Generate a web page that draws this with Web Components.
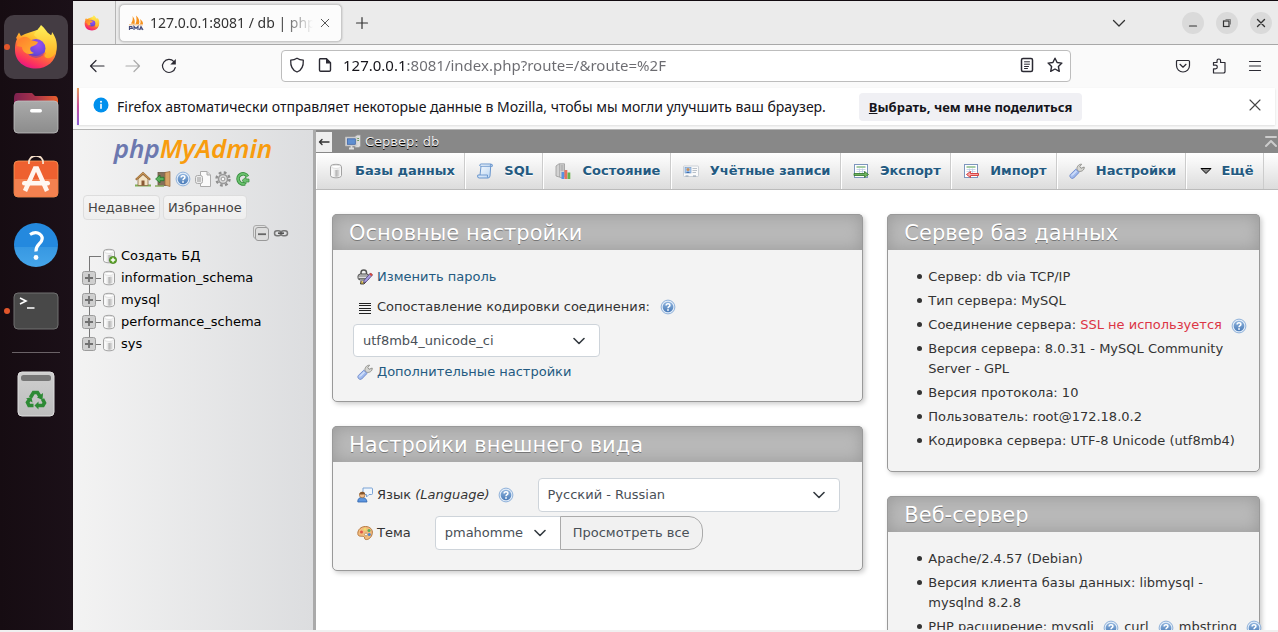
<!DOCTYPE html>
<html lang="ru">
<head>
<meta charset="utf-8">
<title>127.0.0.1:8081 / db | phpMyAdmin</title>
<style>
  html, body { margin: 0; height: 100%; }
  body { overflow: hidden; background: #f0f0f0; font: 13px/20px "DejaVu Sans", sans-serif; color: #333; }
</style>
</head>
<body>
<desktop-shell></desktop-shell>

<script>
/* ---------- icon library ---------- */
const stroke = (d, w = 1.2, extra = '') => `<path d="${d}" fill="none" stroke="currentColor" stroke-width="${w}" stroke-linecap="round" stroke-linejoin="round" ${extra}/>`;
const cylinder = `<defs><linearGradient id="cy"><stop offset="0" stop-color="#fff"/><stop offset=".35" stop-color="#e6e6e6"/><stop offset=".5" stop-color="#b4b4b4"/><stop offset=".8" stop-color="#d2d2d2"/><stop offset="1" stop-color="#f6f6f6"/></linearGradient></defs>
  <path d="M2.500 3.500C2.500 .6 13.500 .6 13.500 3.500V12.500C13.500 15.600 2.500 15.600 2.500 12.500Z" fill="#f6f6f6" stroke="#a2a2a2"/><path d="M4 6C5.500 7.200 10.500 7.200 12 6V12.500C10.500 14.200 5.500 14.200 4 12.500Z" fill="url(#cy)"/><ellipse cx="8" cy="3.800" rx="4.600" ry="1.600" fill="#fff" stroke="#ccc" stroke-width=".6"/>`;
const foxArt = `<defs>
  <linearGradient id="fa" x1=".8" y1="0" x2=".3" y2="1"><stop offset="0" stop-color="#fff44f"/><stop offset=".35" stop-color="#ffb62a"/><stop offset=".6" stop-color="#ff6a3c"/><stop offset=".85" stop-color="#fb2f61"/><stop offset="1" stop-color="#e31587"/></linearGradient>
  <radialGradient id="fb" cx=".6" cy=".3" r=".8"><stop offset="0" stop-color="#a04ff0"/><stop offset=".6" stop-color="#6a49dd"/><stop offset="1" stop-color="#4b35b5"/></radialGradient>
  <linearGradient id="fc" x1="0" y1="0" x2="1" y2="1"><stop offset="0" stop-color="#ff7a2e"/><stop offset="1" stop-color="#ffb52e"/></linearGradient>
  <linearGradient id="fd" x1="0" y1="0" x2="0" y2="1"><stop offset="0" stop-color="#fff25a"/><stop offset="1" stop-color="#ffae22"/></linearGradient></defs>
  <path d="M3 14 6 8.500 8 12 12 10 24 6 35 9C41 13 44 19 43.500 26 43 37 34 44.500 23 44.500 11 44.500 2 37 2 26 2 20 3 17 4 15Z" fill="url(#fa)"/>
  <path d="M28 1C32 4 34 8 37 12 38.500 11 39 10 39 8 43.500 14 45 21 43 27 41 34 33 37 31 31 34 19 24 15 21 11 23 6 26 5 28 1Z" fill="url(#fd)"/>
  <circle cx="23" cy="24.500" r="9.500" fill="url(#fb)"/>
  <path d="M5 17C9 11 15 12 18 16L25 18C24 21 20 22 18 23 16 25 18 28 21 29 15 32 9 28 9 23L4 22Z" fill="url(#fc)"/>
  <path d="M14 28C17 32 23 33 27 31 30 29 32 28 33 29 30 37 19 39 14 28Z" fill="#ff5a3f" opacity=".5"/>`;
const help = `<defs><linearGradient id="hp" x1="0" y1="0" x2="0" y2="1"><stop offset="0" stop-color="#8fb4dd"/><stop offset="1" stop-color="#4a7bb8"/></linearGradient></defs>
  <circle cx="8" cy="8" r="6.900" fill="#e0ebf8" stroke="#86aad6" stroke-width=".9"/><circle cx="8" cy="8" r="5.300" fill="url(#hp)"/>
  <path d="M6.100 6.500C6.100 4.100 9.900 4.200 9.900 6.400 9.900 7.700 8 7.700 8 9.300" fill="none" stroke="#fff" stroke-width="1.500"/><rect x="7.200" y="10.200" width="1.600" height="1.600" fill="#fff"/>`;
const wrench = `<defs><linearGradient id="wr" x1="0" y1="0" x2="1" y2="1"><stop offset="0" stop-color="#cfe0ff"/><stop offset="1" stop-color="#7e9ee0"/></linearGradient></defs>
  <path d="M8 6.800C7.400 4 9.500 1 12.600 1.200L10.800 3.600 12 5.300 15.200 4C15.600 7 12.500 9 9.800 8.300Z" fill="#d6d6d2" stroke="#8c8c88" stroke-width=".9"/>
  <path d="M6.800 6.200 10.100 9.400 4.700 15C2.500 16.500 -.2 13.700 1.300 11.500Z" fill="url(#wr)" stroke="#6d88c9" stroke-width=".9"/><path d="M3 12.500 7.500 8" stroke="#eef4ff"/>`;
const sheet = `<rect x="1.500" y="1.500" width="13" height="13" fill="#fff" stroke="#7d95bd"/><path d="M3.500 4H12.500" stroke="#7fb77f" stroke-width="1.400"/><path d="M3.500 6.500H12.500M3.500 8.500H12.500M3.500 11H12.500M6.500 5.500V12.500M9.500 5.500V12.500" stroke="#bccbe4" stroke-width=".8"/>`;

const ICONS = {
  firefox: [46, foxArt],
  files: [46, `<defs><linearGradient id="a"><stop offset="0" stop-color="#7d2150"/><stop offset=".5" stop-color="#a9334a"/><stop offset="1" stop-color="#e9602c"/></linearGradient><linearGradient id="b" x1="0" y1="0" x2="0" y2="1"><stop offset="0" stop-color="#aaa"/><stop offset="1" stop-color="#8c8c8c"/></linearGradient></defs>
    <path d="M1 8C1 5 2 3 4 3H19L22 6H42C44 6 45 8 45 10V16H1Z" fill="url(#a)"/><rect x="1" y="11" width="44" height="32" rx="4" fill="url(#b)" stroke="#c0c0c0" stroke-width=".8"/><rect x="17" y="19" width="12" height="3.500" rx="1.700" fill="#fff"/>`],
  software: [46, `<rect x="1" y="5" width="44" height="36" rx="4" fill="#ee6130" stroke="#f79c5a" stroke-width=".8"/><path d="M1.500 23H44.500V37C44.500 39 43 40.500 41 40.500H5C3 40.500 1.500 39 1.500 37Z" fill="#f38150"/><path d="M16 8C14.500 -3 31.500 -3 30 8" stroke="#f6dfc9" stroke-width="1.800" fill="none"/>
    <path d="M12 35 22 12.500H24L34 35" fill="none" stroke="#fff5ee" stroke-width="4.500"/><rect x="9" y="25" width="28" height="4.600" rx="2.300" fill="#fff8f2"/>`],
  helpdock: [46, `<defs><linearGradient id="a" x1="0" y1="0" x2="0" y2="1"><stop offset="0" stop-color="#2489de"/><stop offset=".54" stop-color="#2489de"/><stop offset=".55" stop-color="#3798e2"/><stop offset="1" stop-color="#45a5ea"/></linearGradient></defs><circle cx="23" cy="23" r="22" fill="url(#a)"/>
    <path d="M17 12.500C25 7.500 31 14 28.500 19 27 22 22.500 23.500 23 29.500" fill="none" stroke="#fff" stroke-width="3.200"/><circle cx="23" cy="35.500" r="2.400" fill="#fff"/>`],
  terminal: [46, `<rect x="1" y="5" width="44" height="36" rx="4" fill="#484848" stroke="#707070"/><path d="M7 10 13 13 7 16M14 20H21.500" fill="none" stroke="#fff" stroke-width="1.600"/>`],
  trash: [46, `<defs><linearGradient id="a" x1="0" y1="0" x2="0" y2="1"><stop offset="0" stop-color="#cfcfcf"/><stop offset="1" stop-color="#bdbdbd"/></linearGradient></defs><rect x="5" y="1" width="36" height="44" rx="4" fill="url(#a)" stroke="#dedede"/><rect x="8" y="4" width="30" height="6" rx="2.500" fill="#777"/>
    <g fill="none" stroke="#2d8a34" stroke-width="3.600"><path d="M17.500 26.500 20.500 21.500H24.500L27 25.500"/><path d="M29.500 28 31.500 32 30 34.500H24.500"/><path d="M20.500 34.500H16L14.500 31.500 16.500 28.500"/></g><g fill="#2d8a34"><path d="M30 22 29.500 29 24 26.500Z"/><path d="M25.500 30.500V38.500L21.500 34.500Z"/><path d="M13 27.500 18.500 26 19.500 31.500Z"/></g>`],
  pma: [16, `<path d="M3 8.500C5 6 5 3 4.500 1 7 4 7 6.500 6.500 9ZM7.500 9C9 6 8.500 2.500 8 .5 11 3 12 6.500 11 9ZM12 9.300C13 7 12.500 5.500 12 4 14 5.500 15 7 15 9Z" fill="#f6921e"/><path d="M1 9.800H15" stroke="#f3a64f" stroke-width=".8"/><path d="M1.500 15V11.500H3.800L4.300 13.300H1.500M6 15V11.500L8 13.500 10 11.500V15M11.500 15 13 11.500 15 15M12 14H14.500" fill="none" stroke="#444c7c" stroke-width="1.200"/>`],
  close: [16, stroke('M3 3 13 13M13 3 3 13', 1.1)],
  closewin: [16, stroke('M4.500 4.500 11.500 11.500M11.500 4.500 4.500 11.500', 1.4)],
  minwin: [16, stroke('M4.500 11H11.500', 1.2)],
  maxwin: [16, `<rect x="4.500" y="6" width="5.500" height="5.500" fill="none" stroke="#333" stroke-width="1.200"/><path d="M6.500 4.500H11.500V9.500" fill="none" stroke="#777" stroke-width=".9"/>`],
  plus: [16, stroke('M8 2.500V13.500M2.500 8H13.500', 1.2)],
  chevron: [16, stroke('M2.500 5.500 8 11 13.500 5.500', 1.3)],
  back: [16, stroke('M15 8H1.500M7 2.500 1.500 8 7 13.500', 1.2)],
  fold: [12, stroke('M11 6H1.500M4 3.500 1.500 6 4 8.500', 1.4)],
  forward: [16, stroke('M1 8H14.500M9 2.500 14.500 8 9 13.500', 1.2)],
  reload: [16, stroke('M14.300 9.500A6.500 6.500 0 1 1 12.900 3.700', 1.2) + `<path d="M14.800 1V6.500H9.300Z" fill="currentColor"/>`],
  shield: [16, stroke('M8 1.200C10 2.500 12 3 14.300 3.200 14.600 9 12 13.500 8 15 4 13.500 1.400 9 1.700 3.200 4 3 6 2.500 8 1.200Z', 1.3)],
  page: [16, stroke('M3 1.700H9.500L13.500 5.700V13Q13.500 14.300 12.300 14.300H3.700Q2.500 14.300 2.500 13V2.500Z', 1.4) + `<path d="M9 1V6.500H14Z" fill="currentColor"/>`],
  reader: [16, `<rect x="2.500" y="1.500" width="11" height="13" rx="1.500" fill="none" stroke="currentColor" stroke-width="1.500"/>` + stroke('M5.500 4.800H10.500M5.500 7.200H10.500M5.500 9.500H9.500M5.500 11.500H8.500', 1)],
  star: [16, stroke('M8 1.200 10.100 5.500 14.900 6.100 11.400 9.500 12.300 14.300 8 12 3.700 14.300 4.600 9.500 1.100 6.100 5.900 5.500Z', 1.4)],
  pocket: [16, stroke('M2.500 2.500H13.500Q14.500 2.500 14.500 3.500V7.500A6.500 6.500 0 0 1 1.500 7.500V3.500Q1.500 2.500 2.500 2.500Z', 1.2) + stroke('M5 6.300 8 9.200 11 6.300', 1.2)],
  puzzle: [16, stroke('M2.500 15V10.800H4.500A1.800 1.800 0 0 0 4.500 7.200H2.500V4.500H6V2.800A1.800 1.800 0 0 1 9.600 2.800V4.500H14V14L13 15Z', 1.2)],
  burger: [16, stroke('M2.500 3.500H13.500M2.500 8H13.500M2.500 12.500H13.500', 1.2)],
  info: [16, `<circle cx="8" cy="8" r="7.500" fill="#0090ed"/><rect x="7.200" y="6.800" width="1.600" height="5" fill="#fff"/><circle cx="8" cy="4.700" r="1" fill="#fff"/>`],
  home: [16, `<path d="M0 14.500H16" stroke="#7fae54" stroke-width="2"/><path d="M3 8 8 3.500 13 8V14.500H3Z" fill="#f3e3c4" stroke="#8a6a45" stroke-width=".8"/><path d="M.8 8.800 8 2.200 15.200 8.800" fill="none" stroke="#9b6a35" stroke-width="2"/><path d="M1.500 8 8 2 14.500 8" fill="none" stroke="#d7a765" stroke-width=".8"/><rect x="6.500" y="9.500" width="3" height="5" fill="#8a5a35"/>`],
  exit: [16, `<rect x="3" y="1.500" width="8" height="13" fill="#86705a" stroke="#6b5a48" stroke-width=".8"/><path d="M10 1.500 15 .5V15.500L10 14Z" fill="#d7a368" stroke="#99683b" stroke-width=".7"/><path d="M0 15H9" stroke="#8aab60" stroke-width="1.500"/><path d="M.6 8 5 4V6.300H9V9.700H5V12Z" fill="#58b15c" stroke="#24742b" stroke-width=".8"/>`],
  help: [16, help],
  docs: [16, `<path d="M5.500.5H12L15.500 4V15.500H5.500Z" fill="#fafafa" stroke="#aaa"/><path d="M12 .5V4H15.500" fill="#ddd" stroke="#aaa"/><rect x=".5" y="4.500" width="7" height="8" rx="2" fill="#ececec" stroke="#aaa"/><path d="M3 6V11M5 6V11" stroke="#999"/>`],
  gear: [16, `<circle cx="8" cy="8" r="6.500" fill="none" stroke="#8f8f8f" stroke-width="2.400" stroke-dasharray="2.700 2.405"/><circle cx="8" cy="8" r="4.500" fill="#ddd" stroke="#999" stroke-width="1.500"/><circle cx="8" cy="8" r="1.900" fill="#fafafa" stroke="#999"/>`],
  refresh: [16, `<path d="M12.500 5.500A5 5 0 1 0 10 12.500" fill="none" stroke="#338a3a" stroke-width="3.600"/><path d="M12.500 5.500A5 5 0 1 0 10 12.500" fill="none" stroke="#69c06d" stroke-width="2"/><path d="M7 9.500 11 6V8H14V11H11V13Z" fill="#6cc070" stroke="#338a3a" stroke-width=".7"/>`],
  collapse: [16, `<rect x=".5" y=".5" width="13" height="13" rx="2.500" fill="#e0e0e0" stroke="#aaa"/><rect x="2.500" y="2.500" width="13" height="13" rx="2.500" fill="#ddd" stroke="#999"/><path d="M5 9.200H13" stroke="#666" stroke-width="1.800"/>`],
  link: [16, `<g fill="none" stroke="#777" stroke-width="1.500"><rect x="1.500" y="5.700" width="6.500" height="5" rx="2.500"/><rect x="8" y="5.700" width="6.500" height="5" rx="2.500"/></g><path d="M5 8.200H11" stroke="#555" stroke-width="1.600"/>`],
  expand: [14, `<rect x=".5" y=".5" width="13" height="13" rx="2" fill="#cfcfcf" stroke="#9c9c9c"/><path d="M7 3V11M3 7H11" stroke="#707070" stroke-width="1.800"/>`],
  db: [16, cylinder],
  dbadd: [16, cylinder + `<circle cx="12" cy="12" r="3.600" fill="#5fa52b" stroke="#3d7d17" stroke-width=".7"/><path d="M12 9.800V14.200M9.800 12H14.200" stroke="#fff" stroke-width="1.400"/>`],
  server: [16, `<path d="M10 2.500 12 1H15.500V12L14 13.500H10Z" fill="#ddd" stroke="#999" stroke-width=".8"/><path d="M11.500 4.500H14M11.500 6.500H14" stroke="#6a9a5a"/><rect x=".8" y="3.300" width="11" height="8.400" fill="#d9d9d9" stroke="#ccc"/><rect x="2.300" y="4.800" width="8" height="5.500" fill="#5f8fd0" stroke="#33589b" stroke-width=".7"/><path d="M4 14.500H9M6.500 12V14" stroke="#ddd" stroke-width="1.800"/>`],
  sql: [16, `<defs><linearGradient id="a" x1="0" y1="0" x2="1" y2="1"><stop offset="0" stop-color="#fff"/><stop offset="1" stop-color="#b5d2f1"/></linearGradient></defs><path d="M3.500 1H13.500Q16 1 15.300 3.300H13.700L13 13Q12.700 15 11 15H2Q0 15 .8 12H3L4 3.300Q1.500 3 3.500 1Z" fill="url(#a)" stroke="#5b8cc8" stroke-width=".9"/><path d="M3 12H10.500Q10 15 11 14.500M4 3.300H13.700Q12.500 2 14 1" fill="none" stroke="#5b8cc8" stroke-width=".8"/>`],
  status: [16, `<path d="M1 3 4 .8H9.500V14L7.500 15 1 13Z" fill="#d2d2d2" stroke="#999" stroke-width=".8"/><path d="M4.500 1V14" stroke="#999" stroke-width=".6"/><path d="M5.500 3H8.500M5.500 5H8.500M5.500 7H8.500" stroke="#888" stroke-width=".7"/><rect x="6.500" y="9" width="2.800" height="7" fill="#5a91e0"/><rect x="9.500" y="7" width="2.800" height="9" fill="#e8705e"/><rect x="12.500" y="9.500" width="2.800" height="6.500" fill="#6ab24e"/>`],
  users: [16, `<rect x=".5" y="3" width="15" height="10.500" rx=".8" fill="#fafafa" stroke="#c2c8cf" stroke-width=".8"/><rect x="2" y="4.500" width="6" height="5.500" fill="#a9c9ee" stroke="#6c94c6" stroke-width=".6"/><circle cx="5" cy="6.500" r="1.500" fill="#c98f58"/><path d="M3 10Q5 7 7 10" fill="#3c6eae"/><path d="M9.500 5.500H14M9.500 7.500H14M9.500 9.500H13" stroke="#a9b2bd" stroke-width=".8"/><path d="M2.500 13H5.500M10 13H13" stroke="#8e9eb0"/>`],
  export: [16, sheet + `<path d="M1 10.500H11.500V8.500L15.500 11.500 11.500 14.500V12.500H1Z" fill="#6db35e" stroke="#2f7429" stroke-width=".8"/>`],
  import: [16, sheet + `<path d="M15.500 10.500H7.500V8.500L3.500 11.500 7.500 14.500V12.500H15.500Z" fill="#f6a5a5" stroke="#d43333" stroke-width=".9"/>`],
  wrench: [16, wrench],
  more: [16, `<path d="M3 5.500H13L8 10.500Z" fill="#888" stroke="#000"/>`],
  password: [16, `<path d="M4 5V3.500C4 0 9.500 0 9.500 3.500V5" fill="none" stroke="#555" stroke-width="1.500"/><rect x="1" y="5" width="11" height="6" rx="2.500" fill="#ddd" stroke="#444"/><path d="M.8 7H11M.8 9.500H11" stroke="#777"/><path d="M4 12 3.500 15H7L9 13" fill="#d7bd52" stroke="#222" stroke-width=".8"/><path d="M13.500 4 15.500 6 9 13 6.500 14 7.200 11.200Z" fill="#a79be2" stroke="#4d4176" stroke-width=".8"/><path d="M13 4.500 15 6.500" stroke="#d3483b" stroke-width="2"/>`],
  lines: [16, `<path d="M2 4.500H14M2 6.500H14M2 9.500H14M2 11.500H14M2 14.500H14" stroke="#222"/>`],
  lang: [16, `<path d="M6 1H14.500Q15.500 1 15.500 2V6.500Q15.500 7.500 14.500 7.500H12L9.500 10V7.500H6Z" fill="#f0f6fd" stroke="#6d9bd1" stroke-width=".9"/><path d="M.8 15Q.5 10.500 5 10.500T10 15Z" fill="#5c96e0" stroke="#2d62ab" stroke-width=".8"/><circle cx="5.200" cy="8" r="2.800" fill="#f0bd8d" stroke="#94612f" stroke-width=".6"/><path d="M2.400 7.500C2.500 4 8 4 8 7.200 6 7.200 4 7.500 2.400 7.500Z" fill="#84552c"/>`],
  theme: [16, `<path d="M8.500 1.500C13 1.500 16 4.500 15.300 8.500 14.600 12.500 11.500 15 8.500 14.500 7 14.200 8.500 12 6.500 11.500 4.500 11 .8 12 .8 8.500.8 4.500 4 1.500 8.500 1.500Z" fill="#f2bb7e" stroke="#b06f33" stroke-width=".9"/><circle cx="4.500" cy="7" r="1.500" fill="#e15348"/><circle cx="8" cy="4.300" r="1.400" fill="#f0e06a"/><circle cx="12" cy="5.500" r="1.500" fill="#57ac59"/><circle cx="12.300" cy="9.500" r="1.500" fill="#4f83cf"/><circle cx="9" cy="9.500" r="1.400" fill="#fff" stroke="#a07040" stroke-width=".6"/>`],
  totop: [14, stroke('M2 2H12', 2) + stroke('M2 11 7 6 12 11', 2)]
};

class UiIcon extends HTMLElement {
  connectedCallback() {
    if (this.shadowRoot) return;
    const [box, art] = ICONS[this.getAttribute('name')];
    const size = this.getAttribute('size') || box;
    this.attachShadow({ mode: 'open' }).innerHTML =
      `<style>:host{display:inline-flex;flex:none}svg{display:block}</style><svg width="${size}" height="${size}" viewBox="0 0 ${box} ${box}" aria-hidden="true">${art}</svg>`;
  }
}
customElements.define('ui-icon', UiIcon);

/* Registers an element whose shadow root holds a fixed template, with [[attr]] placeholders filled from attributes. */
const define = (tag, css, html) => customElements.define(tag, class extends HTMLElement {
  connectedCallback() {
    if (this.shadowRoot) return;
    const t = document.createElement('template');
    t.innerHTML = `<style>*{box-sizing:border-box}button,input,select{font:inherit;color:inherit}${css}</style>` +
      html.replace(/\[\[(\w+)\]\]/g, (_, a) => this.getAttribute(a) || '');
    this.attachShadow({ mode: 'open' }).append(t.content.cloneNode(true));
  }
});

/* ---------- desktop dock ---------- */
define('dock-item', `
  :host{display:block;position:relative}
  button{display:grid;place-items:center;width:64px;height:64px;padding:0;border:0;border-radius:10px;background:none}
  :host([active]) button{background:#443c43}
  :host([running])::before{content:"";position:absolute;left:0;top:29px;width:6px;height:6px;border-radius:50%;background:#e2562b}`,
  `<button aria-label="[[label]]"><ui-icon name="[[icon]]"></ui-icon></button>`);

define('app-dock', `
  :host{display:block;background:linear-gradient(90deg,#160c12,#1b1018)}
  nav{display:flex;flex-direction:column;align-items:center;gap:2px;padding:15px 1px 0 0}
  hr{width:48px;margin:7px 0;border:0;border-top:1px solid #6a6267}`,
  `<nav>
    <dock-item icon="firefox" label="Firefox" active running></dock-item>
    <dock-item icon="files" label="Files"></dock-item>
    <dock-item icon="software" label="Software"></dock-item>
    <dock-item icon="helpdock" label="Help"></dock-item>
    <dock-item icon="terminal" label="Terminal" running></dock-item>
    <hr>
    <dock-item icon="trash" label="Trash"></dock-item>
  </nav>`);

/* ---------- browser chrome ---------- */
define('tab-strip', `
  :host{display:flex;align-items:center;height:44px;background:#ebebeb;border-bottom:1px solid #a8a8a8;color:#333;font:14px/20px "Noto Sans",sans-serif}
  button{display:grid;place-items:center;padding:0;border:0;background:none}
  .pin{width:43px;height:43px;padding-right:4px;border-right:1px solid #b5b5b5}
  .tab{display:flex;align-items:center;gap:6px;width:223px;height:38px;margin-left:3px;padding:0 10px 0 8px;border:1px solid #c9c9c9;border-radius:5px;background:#fcfcfc;box-shadow:0 0 2px #aaa}
  .title{flex:1;overflow:hidden;white-space:nowrap;mask-image:linear-gradient(90deg,#000 80%,transparent)}
  .new{width:40px;height:40px}
  .list{margin-left:auto;margin-right:55px}
  .win{width:22px;height:22px;margin-right:12px;border-radius:50%;background:#dadada}
  .win:last-child{margin-right:6px}`,
  `<button class="pin" aria-label="Firefox"><ui-icon name="firefox" size="16"></ui-icon></button>
   <div class="tab"><ui-icon name="pma"></ui-icon><span class="title">127.0.0.1:8081 / db | phpMyAdmin</span><button aria-label="Close tab"><ui-icon name="close" size="12"></ui-icon></button></div>
   <button class="new" aria-label="New tab"><ui-icon name="plus"></ui-icon></button>
   <button class="list" aria-label="All tabs"><ui-icon name="chevron"></ui-icon></button>
   <button class="win" aria-label="Minimize"><ui-icon name="minwin"></ui-icon></button>
   <button class="win" aria-label="Restore"><ui-icon name="maxwin"></ui-icon></button>
   <button class="win" aria-label="Close"><ui-icon name="closewin"></ui-icon></button>`);

define('nav-toolbar', `
  :host{display:grid;grid-template-columns:208px 1fr 207px;align-items:center;height:43px;padding-bottom:1px;box-sizing:border-box;background:#fafafa;color:#2b2a33;font:15px/20px "Noto Sans",sans-serif}
  button{display:grid;place-items:center;padding:0;border:0;background:none}
  .left,.right{display:flex;gap:20px}
  .left{padding-left:16px}
  .right{justify-content:flex-end;padding-right:15px}
  .fwd{color:#aaa}
  .url{display:flex;align-items:center;gap:12px;height:32px;padding:0 7px 2px;border:1px solid #bdbdbd;border-radius:4px;background:#fff}
  input{flex:1;min-width:0;margin-left:-2px;padding:0;border:0;outline:0;color:transparent;background:linear-gradient(90deg,#15141a 62px,#6b6b70 62px);-webkit-background-clip:text;background-clip:text}`,
  `<div class="left"><button aria-label="Back"><ui-icon name="back"></ui-icon></button><button class="fwd" aria-label="Forward"><ui-icon name="forward"></ui-icon></button><button aria-label="Reload"><ui-icon name="reload"></ui-icon></button></div>
   <div class="url"><ui-icon name="shield"></ui-icon><ui-icon name="page"></ui-icon><input aria-label="Address" value="127.0.0.1:8081/index.php?route=/&amp;route=%2F"><button aria-label="Reader"><ui-icon name="reader"></ui-icon></button><button aria-label="Bookmark"><ui-icon name="star"></ui-icon></button></div>
   <div class="right"><button aria-label="Pocket"><ui-icon name="pocket"></ui-icon></button><button aria-label="Extensions"><ui-icon name="puzzle"></ui-icon></button><button aria-label="Menu"><ui-icon name="burger"></ui-icon></button></div>`);

define('info-bar', `
  :host{display:block;padding:0 3px 4px 4px;background:#fafafa;border-bottom:1px solid #b4b4b4;color:#15141a;font:14px/20px "Noto Sans",sans-serif}
  .card{display:flex;align-items:center;height:37px;padding:0 12px 0 14px;border-left:2px solid transparent;border-image:linear-gradient(#e9a35a,#c94f9e,#8a62d8) 1;background:#fff;box-shadow:0 1px 2px #ddd}
  .card>ui-icon{margin:0 8px 4px 0}
  button{padding:0;border:0;background:none}
  .pick{height:28px;margin-left:33px;padding:0 10px;border-radius:4px;background:#f0f0f4;font-weight:700;font-size:13px}
  .x{display:grid;margin-left:auto;margin-bottom:4px;color:#444}`,
  `<div class="card"><ui-icon name="info"></ui-icon><span>Firefox автоматически отправляет некоторые данные в Mozilla, чтобы мы могли улучшить ваш браузер.</span><button class="pick"><u>В</u>ыбрать, чем мне поделиться</button><button class="x" aria-label="Close"><ui-icon name="close"></ui-icon></button></div>`);

/* ---------- phpMyAdmin navigation ---------- */
define('tree-row', `
  :host{display:flex;align-items:center;height:22px;color:#000}
  .branch{display:flex;align-items:center;width:19px;height:22px;
    background:linear-gradient(#777,#777) 7px 11px/12px 1px no-repeat,linear-gradient(#777,#777) 7px 0/1px 100% no-repeat}
  :host([first]) .branch{background-position:7px 11px,7px 11px}
  :host([last]) .branch{background-size:12px 1px,1px 11px}
  button{display:flex;padding:0;border:0;background:none}
  :host([first]) button{display:none}
  a{display:flex;align-items:center;gap:4px;color:#000;text-decoration:none}`,
  `<span class="branch"><button aria-label="Expand"><ui-icon name="expand"></ui-icon></button></span><a href="#"><ui-icon name="[[icon]]"></ui-icon><slot></slot></a>`);

define('nav-panel', `
  :host{display:block;padding:0 9px;background:linear-gradient(90deg,#f3f3f3,#dcdddf);border-right:3px solid #aaa}
  .logo{display:block;text-align:center;font:italic 600 26px/36px "Noto Sans",sans-serif;color:#f89c0e;text-decoration:none}
  .logo span{color:#6c78af}
  .tools{display:flex;justify-content:center;gap:4px;margin-top:5px}
  .tools a,.acts a{display:flex}
  .quick{display:flex;gap:3px;margin:8px 0 0 1px}
  .quick button{height:25px;padding:0 4px;border:1px solid #ddd;border-radius:4px;background:linear-gradient(#f4f4f4,#eee);color:#444}
  .acts{display:flex;justify-content:flex-end;gap:4px;margin:5px 15px 4px 0}`,
  `<a class="logo" href="#"><span>php</span>MyAdmin</a>
   <div class="tools"><a href="#" aria-label="Home"><ui-icon name="home"></ui-icon></a><a href="#" aria-label="Log out"><ui-icon name="exit"></ui-icon></a><a href="#" aria-label="Help"><ui-icon name="help"></ui-icon></a><a href="#" aria-label="Documentation"><ui-icon name="docs"></ui-icon></a><a href="#" aria-label="Settings"><ui-icon name="gear"></ui-icon></a><a href="#" aria-label="Reload"><ui-icon name="refresh"></ui-icon></a></div>
   <div class="quick"><button>Недавнее</button><button>Избранное</button></div>
   <div class="acts"><a href="#" aria-label="Collapse"><ui-icon name="collapse"></ui-icon></a><a href="#" aria-label="Link"><ui-icon name="link"></ui-icon></a></div>
   <tree-row first icon="dbadd">Создать БД</tree-row>
   <tree-row icon="db">information_schema</tree-row>
   <tree-row icon="db">mysql</tree-row>
   <tree-row icon="db">performance_schema</tree-row>
   <tree-row last icon="db">sys</tree-row>`);

/* ---------- phpMyAdmin content ---------- */
define('server-bar', `
  :host{display:flex;align-items:center;height:23px;background:#888;color:#eee;text-shadow:0 1px 0 #000}
  .fold{display:grid;place-items:center;width:16px;height:20px;padding:0;border:0;background:#eee;color:#333}
  a.crumb{display:flex;align-items:center;gap:4px;margin-left:13px;color:inherit;text-decoration:none}
  .top{display:flex;margin-left:auto;color:#ccc}`,
  `<button class="fold" aria-label="Hide panel"><ui-icon name="fold"></ui-icon></button>
   <a class="crumb" href="#"><ui-icon name="server"></ui-icon>Сервер: db</a>
   <a class="top" href="#" aria-label="Top"><ui-icon name="totop"></ui-icon></a>`);

define('menu-tab', `
  :host{display:block;flex:1 0 auto;border-left:1px solid #fff;border-right:1px solid #ccc}
  a{display:flex;align-items:center;gap:11px;height:100%;padding:0 9px 0 11px;color:#235a81;font-weight:700;white-space:nowrap;text-decoration:none;text-shadow:0 1px 0 #fff}
  :host([compact]) a{gap:7px}`,
  `<a href="#"><ui-icon name="[[icon]]"></ui-icon><slot></slot></a>`);

define('menu-bar', `
  :host{display:flex;height:37px;box-sizing:border-box;padding-right:14px;background:linear-gradient(#fff,#dcdcdc);border-bottom:1px solid #bbb}`,
  `<menu-tab icon="db">Базы данных</menu-tab><menu-tab icon="sql">SQL</menu-tab><menu-tab icon="status">Состояние</menu-tab><menu-tab icon="users">Учётные записи</menu-tab><menu-tab icon="export">Экспорт</menu-tab><menu-tab icon="import">Импорт</menu-tab><menu-tab icon="wrench">Настройки</menu-tab><menu-tab compact icon="more">Ещё</menu-tab>`);

define('info-card', `
  :host{display:block;border:1px solid #999;border-radius:5px;background:#f3f3f3;box-shadow:2px 2px 5px #ccc}
  h2{margin:-1px -1px 0;height:36px;padding:0 16px;border:1px solid #999;border-bottom:0;border-radius:5px 5px 0 0;background:#b9b9b9;box-shadow:inset 0 0 16px #999;color:#fff;font-weight:400;font-size:21px;line-height:36px;text-shadow:0 1px 0 #777;white-space:nowrap}`,
  `<h2>[[heading]]</h2><slot></slot>`);

const chevronUrl = `url("data:image/svg+xml,%3Csvg xmlns='http://www.w3.org/2000/svg' width='12' height='12' viewBox='0 0 12 12'%3E%3Cpath d='M1 3.500 6 8.500 11 3.500' fill='none' stroke='%23343a40' stroke-width='1.600' stroke-linecap='round' stroke-linejoin='round'/%3E%3C/svg%3E")`;
const selectCss = `select{appearance:none;height:34px;padding:0 36px 0 9px;border:1px solid #ced4da;border-radius:4px;background:#fff ${chevronUrl} no-repeat right 14px center;color:#495057}`;

define('general-settings', `
  :host{display:flex;flex-direction:column;align-items:flex-start;padding:16px 20px 18px}
  ${selectCss}
  .row{display:flex;align-items:center;gap:4px;height:22px;margin-left:4px}
  a{color:#235a81;text-decoration:none}
  .charset{margin-top:8px}.charset a{display:flex;margin-left:6px}
  select{width:247px;height:33px;margin:6px 0 4px}`,
  `<a class="row" href="#"><ui-icon name="password"></ui-icon>Изменить пароль</a>
   <div class="row charset"><ui-icon name="lines"></ui-icon><label for="c">Сопоставление кодировки соединения:</label><a href="#" aria-label="Help"><ui-icon name="help"></ui-icon></a></div>
   <select id="c"><option>utf8mb4_unicode_ci</option></select>
   <a class="row" href="#"><ui-icon name="wrench"></ui-icon>Дополнительные настройки</a>`);

define('appearance-settings', `
  :host{display:flex;flex-direction:column;gap:4px;padding:16px 22px 20px 24px}
  ${selectCss}
  .row{display:flex;align-items:center}
  label{display:flex;align-items:center;gap:4px}
  a{display:flex;margin:0 24px 0 8px}
  #l{flex:1}
  #t{width:126px;margin-left:24px;border-radius:4px 0 0 4px}
  button{height:34px;margin-left:-1px;padding:0 12px;border:1px solid #aaa;border-radius:0 14px 14px 0;background:#f1f1f1;color:#495057}`,
  `<div class="row"><label for="l"><ui-icon name="lang"></ui-icon><span>Язык <i>(Language)</i></span></label><a href="#" aria-label="Help"><ui-icon name="help"></ui-icon></a><select id="l"><option>Русский - Russian</option></select></div>
   <div class="row"><label for="t"><ui-icon name="theme"></ui-icon>Тема</label><select id="t"><option>pmahomme</option></select><button>Просмотреть все</button></div>`);

const listCss = `
  :host{display:block}
  ul{margin:0;padding:17px 0 16px 40px;list-style:none}
  li{margin-bottom:4px}
  li::before{content:"";display:inline-block;width:5px;height:5px;margin:0 6px 0 -11px;border-radius:50%;background:#333;vertical-align:2px}
  a{display:inline-flex;height:16px;vertical-align:-5px;margin:0 1px 0 5px}
  .line{white-space:nowrap}
  .warn{color:#dc3545}`;
define('database-info', listCss, `<ul>
  <li>Сервер: db via TCP/IP</li><li>Тип сервера: MySQL</li>
  <li>Соединение сервера: <span class="warn">SSL не используется</span> <a href="#" aria-label="Help"><ui-icon name="help"></ui-icon></a></li>
  <li>Версия сервера: 8.0.31 - MySQL Community Server - GPL</li><li>Версия протокола: 10</li>
  <li>Пользователь: root@172.18.0.2</li><li>Кодировка сервера: UTF-8 Unicode (utf8mb4)</li></ul>`);
define('web-info', listCss, `<ul>
  <li>Apache/2.4.57 (Debian)</li><li>Версия клиента базы данных: libmysql - mysqlnd 8.2.8</li>
  <li class="line">PHP расширение: mysqli <a href="#" aria-label="Help"><ui-icon name="help"></ui-icon></a> curl <a href="#" aria-label="Help"><ui-icon name="help"></ui-icon></a> mbstring <a href="#" aria-label="Help"><ui-icon name="help"></ui-icon></a></li></ul>`);

define('pma-content', `
  :host{display:block;min-width:0;overflow:hidden;background:#fff}
  .cols{display:grid;grid-template-columns:7fr 5fr;padding:24px 6px 0 4px}
  .col{display:flex;flex-direction:column;gap:24px;min-width:0;padding:0 12px}`,
  `<server-bar></server-bar><menu-bar></menu-bar>
   <div class="cols">
     <div class="col"><info-card heading="Основные настройки"><general-settings></general-settings></info-card><info-card heading="Настройки внешнего вида"><appearance-settings></appearance-settings></info-card></div>
     <div class="col"><info-card heading="Сервер баз данных"><database-info></database-info></info-card><info-card heading="Веб-сервер"><web-info></web-info></info-card></div>
   </div>`);

define('browser-window', `
  :host{display:flex;flex-direction:column;min-height:0;border-top:1px solid #120a10;background:#fff}
  .page{flex:1;min-height:0;display:grid;grid-template-columns:243px 1fr;overflow:hidden}`,
  `<tab-strip></tab-strip><nav-toolbar></nav-toolbar><info-bar></info-bar>
   <div class="page"><nav-panel></nav-panel><pma-content></pma-content></div>`);

define('desktop-shell', `
  :host{display:grid;grid-template-columns:73px minmax(0,1fr);grid-template-rows:minmax(0,1fr);height:100vh;box-sizing:border-box;border-bottom:2px solid #f0f0f0}`,
  `<app-dock></app-dock><browser-window></browser-window>`);
</script>
</body>
</html>
